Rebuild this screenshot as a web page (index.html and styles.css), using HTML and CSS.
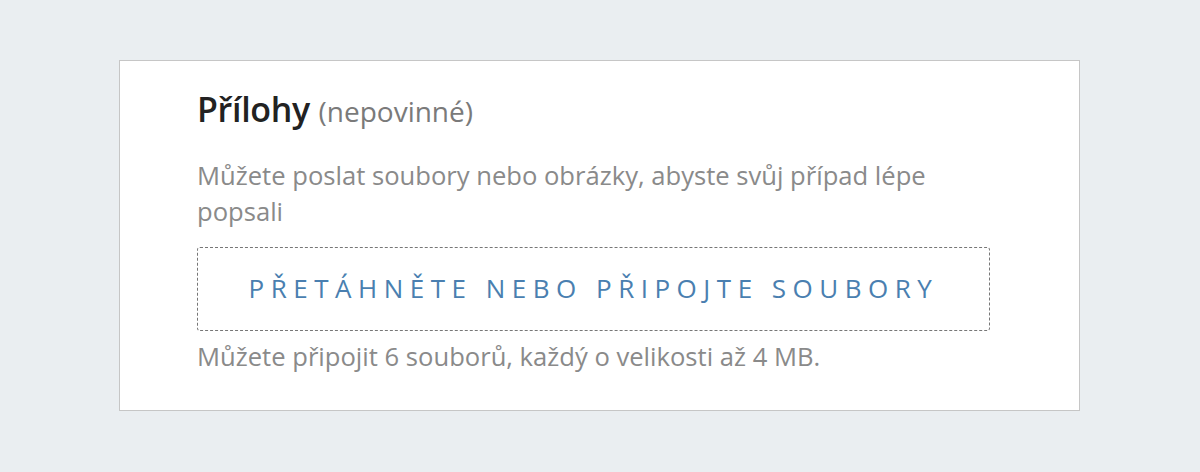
FILE: index.html
```html
<!DOCTYPE html>
<html lang="cs">
<head>
<meta charset="utf-8">
<title>Přílohy</title>
<link rel="stylesheet" href="styles.css">
</head>
<body>
<section class="card">
  <h2 class="title">Přílohy <span class="optional">(nepovinné)</span></h2>
  <p class="desc">Můžete poslat soubory nebo obrázky, abyste svůj případ lépe popsali</p>
  <div class="dropzone">Přetáhněte nebo připojte soubory</div>
  <p class="note">Můžete připojit 6 souborů, každý o velikosti až 4 MB.</p>
</section>
</body>
</html>
```

FILE: styles.css
```css
html, body {
  margin: 0;
  padding: 0;
}
body {
  background: #eaeef1;
  font-family: "Open Sans", "Liberation Sans", sans-serif;
  padding-top: 60px;
  height: 472px;
  box-sizing: border-box;
}
.card {
  box-sizing: border-box;
  margin-left: 119px;
  width: 961px;
  background: #ffffff;
  border: 1px solid #c6c6c6;
  padding: 28px 89px 35px 77px;
}
.title {
  margin: 0;
  font-size: 34px;
  font-weight: 600;
  line-height: 40px;
  color: #222222;
  letter-spacing: -0.3px;
}
.optional {
  font-size: 28px;
  font-weight: 400;
  line-height: 1;
  color: #7a7a7a;
  letter-spacing: 0;
}
.desc {
  margin: 29px 0 0;
  font-size: 25.6px;
  line-height: 36px;
  color: #8a8a8a;
}
.dropzone {
  margin-top: 17px;
  border: 1px dashed #777777;
  border-radius: 3px;
  padding: 22px 0 24px;
  text-align: center;
  text-transform: uppercase;
  font-size: 26px;
  line-height: 36px;
  letter-spacing: 0.25em;
  color: #4a7fb0;
}
.note {
  margin: 8px 0 0;
  font-size: 25.6px;
  line-height: 36px;
  color: #8a8a8a;
}
```
